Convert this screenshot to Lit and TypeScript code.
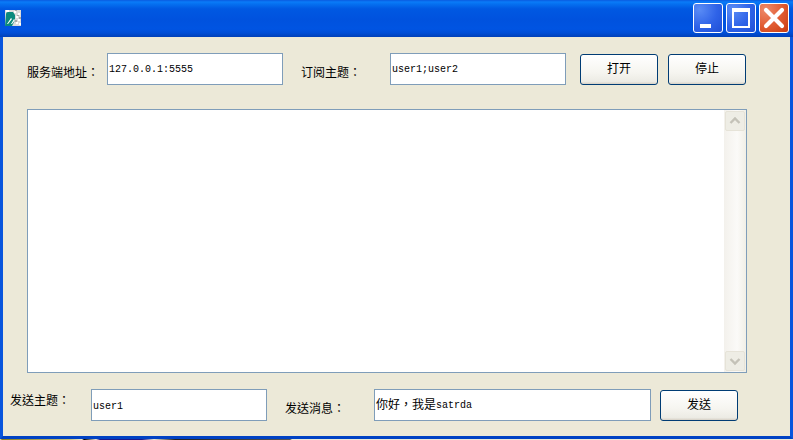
import { LitElement, html, css } from "lit";
import { customElement } from "lit/decorators.js";

@customElement("app-root")
export class AppRoot extends LitElement {
  static styles = css`
    :host {
      display: block;
      width: 793px;
      height: 440px;
      overflow: hidden;
      font-family: "Liberation Mono", "Noto Sans CJK TC", monospace;
      color: #000;
    }
    .window {
      display: flex;
      flex-direction: column;
      height: 440px;
      background: #ece9d8;
    }
    .title {
      height: 37px;
      flex: none;
      display: flex;
      align-items: flex-start;
      padding: 3px 4px 0 5px;
      box-sizing: border-box;
      background: linear-gradient(
        180deg,
        #0a5be0 0,
        #0a7bf8 2px,
        #0570f0 4px,
        #0058e2 9px,
        #0052de 20px,
        #0054e2 29px,
        #004ed6 33px,
        #0040b8 37px
      );
    }
    .appicon {
      margin-top: 7px;
      display: block;
    }
    .spacer {
      flex: 1;
    }
    .caps {
      display: flex;
      gap: 3px;
    }
    .cap {
      width: 30px;
      height: 30px;
      box-sizing: border-box;
      border: 1px solid #fff;
      border-radius: 3px;
      display: block;
      background: radial-gradient(circle at 20% 20%, #5a8cf5 0, #2f63e8 55%, #1f4fd6 100%);
    }
    .cap.close {
      background: radial-gradient(circle at 20% 20%, #ee8a6a 0, #e05a30 55%, #c83c10 100%);
    }
    .client {
      flex: 1;
      min-height: 0;
      box-sizing: border-box;
      background: #ece9d8;
      border-left: 3px solid #0855dd;
      border-right: 3px solid #0855dd;
      border-bottom: 3px solid #0042c4;
      padding-top: 16px;
    }
    .sliver {
      height: 1px;
      flex: none;
      background: linear-gradient(
        90deg,
        #ece9d8 0,
        #8a8020 2px,
        #c8c080 70px,
        #ece9d8 82px,
        #000 84px,
        #ece9d8 96px,
        #1a1a8c 100px,
        #1a1a8c 142px,
        #ece9d8 154px,
        #222 175px,
        #555 290px,
        #ece9d8 292px
      );
    }
    .row {
      display: flex;
      align-items: flex-start;
    }
    .top {
      margin-left: 24px;
    }
    .bottom {
      margin-left: 7px;
      margin-top: 16px;
    }
    .label {
      font-size: 12px;
      line-height: 16px;
      white-space: nowrap;
      flex: none;
    }
    .lab-addr {
      width: 80px;
      padding-top: 13px;
    }
    .lab-sub {
      width: 89px;
      margin-left: 18px;
      padding-top: 13px;
    }
    .lab-topic {
      width: 81px;
      padding-top: 5px;
    }
    .lab-msg {
      width: 89px;
      margin-left: 18px;
      padding-top: 13px;
    }
    .field {
      box-sizing: border-box;
      height: 32px;
      flex: none;
      background: #fff;
      border: 1px solid #7f9db9;
      padding-left: 1px;
      padding-top: 2px;
      display: flex;
      align-items: center;
      font-size: 10px;
      line-height: 14px;
      white-space: pre;
    }
    .field.low {
      padding-top: 3px;
    }
    .field.w176 {
      width: 176px;
    }
    .field.w277 {
      width: 277px;
    }
    .cjk {
      font-size: 12px;
    }
    .btn {
      box-sizing: border-box;
      width: 78px;
      height: 31px;
      margin-top: 1px;
      padding-top: 1px;
      flex: none;
      border: 1px solid #003c74;
      border-radius: 3px;
      background: linear-gradient(180deg, #fff 0, #f6f5f0 60%, #ecebe4 92%, #d6d0c5 100%);
      display: flex;
      align-items: center;
      justify-content: center;
      font-size: 12px;
      line-height: 16px;
    }
    .btn.open {
      margin-left: 14px;
    }
    .btn.stop {
      margin-left: 10px;
    }
    .btn.send {
      margin-left: 9px;
    }
    .log {
      box-sizing: border-box;
      width: 720px;
      height: 264px;
      margin: 24px 0 0 24px;
      background: #fff;
      border: 1px solid #7f9db9;
      display: flex;
    }
    .log-body {
      flex: 1;
    }
    .scroll {
      width: 22px;
      flex: none;
      box-sizing: border-box;
      padding: 1px 0 1px 1px;
      display: flex;
      flex-direction: column;
      justify-content: space-between;
      background: linear-gradient(90deg, #f3f1ec 0, #fbfaf8 60%, #f1efe6 100%);
    }
    .sb {
      width: 20px;
      height: 20px;
      box-sizing: border-box;
      border: 1px solid #e6e3d8;
      border-radius: 2px;
      background: #eeede5;
      display: block;
    }
  `;

  render() {
    return html`
      <div class="window">
        <div class="title">
          <svg class="appicon" width="16" height="16" viewBox="0 0 16 16">
            <rect x="0" y="0" width="16" height="16" fill="#dcdcdc" />
            <path d="M9 1h2v2H9zM13 3h2v2h-2zM11 6h2v2h-2zM13 9h2v2h-2zM11 12h2v2h-2zM14 13h2v2h-2zM1 0h3v2H1z" fill="#fff" />
            <path d="M10 0h2v1h-2zM12 5h2v1h-2zM14 7h2v2h-2zM10 10h2v2h-2z" fill="#a8a8a8" />
            <path d="M1 4q0-2 2-2h5l2 3v5l-3 6H0z" fill="#0b8a7d" />
            <path d="M2 14l4-6 1 1-4 5zM6 14l3-5 1 1-3 4z" fill="#fff" />
          </svg>
          <div class="spacer"></div>
          <div class="caps">
            <svg class="cap" viewBox="0 0 28 28">
              <rect x="6" y="20" width="11" height="4" fill="#fff" />
            </svg>
            <svg class="cap" viewBox="0 0 28 28">
              <path fill="#fff" fill-rule="evenodd" d="M5 4h18v20H5zM7 8v14h14V8z" />
            </svg>
            <svg class="cap close" viewBox="0 0 28 28">
              <path d="M6 6l16 16M22 6L6 22" stroke="#fff" stroke-width="4.2" stroke-linecap="round" />
            </svg>
          </div>
        </div>
        <div class="client">
          <div class="row top">
            <div class="label lab-addr">服务端地址：</div>
            <div class="field w176">127.0.0.1:5555</div>
            <div class="label lab-sub">订阅主题：</div>
            <div class="field w176">user1;user2</div>
            <div class="btn open">打开</div>
            <div class="btn stop">停止</div>
          </div>
          <div class="log">
            <div class="log-body"></div>
            <div class="scroll">
              <svg class="sb" viewBox="0 0 18 18">
                <path d="M4.5 11L9 6.5 13.5 11" fill="none" stroke="#c4c2b8" stroke-width="2.4" />
              </svg>
              <svg class="sb" viewBox="0 0 18 18">
                <path d="M4.5 7L9 11.5 13.5 7" fill="none" stroke="#c4c2b8" stroke-width="2.4" />
              </svg>
            </div>
          </div>
          <div class="row bottom">
            <div class="label lab-topic">发送主题：</div>
            <div class="field w176 low">user1</div>
            <div class="label lab-msg">发送消息：</div>
            <div class="field w277"><span class="cjk">你好，我是</span>satrda</div>
            <div class="btn send">发送</div>
          </div>
        </div>
        <div class="sliver"></div>
      </div>
    `;
  }
}
